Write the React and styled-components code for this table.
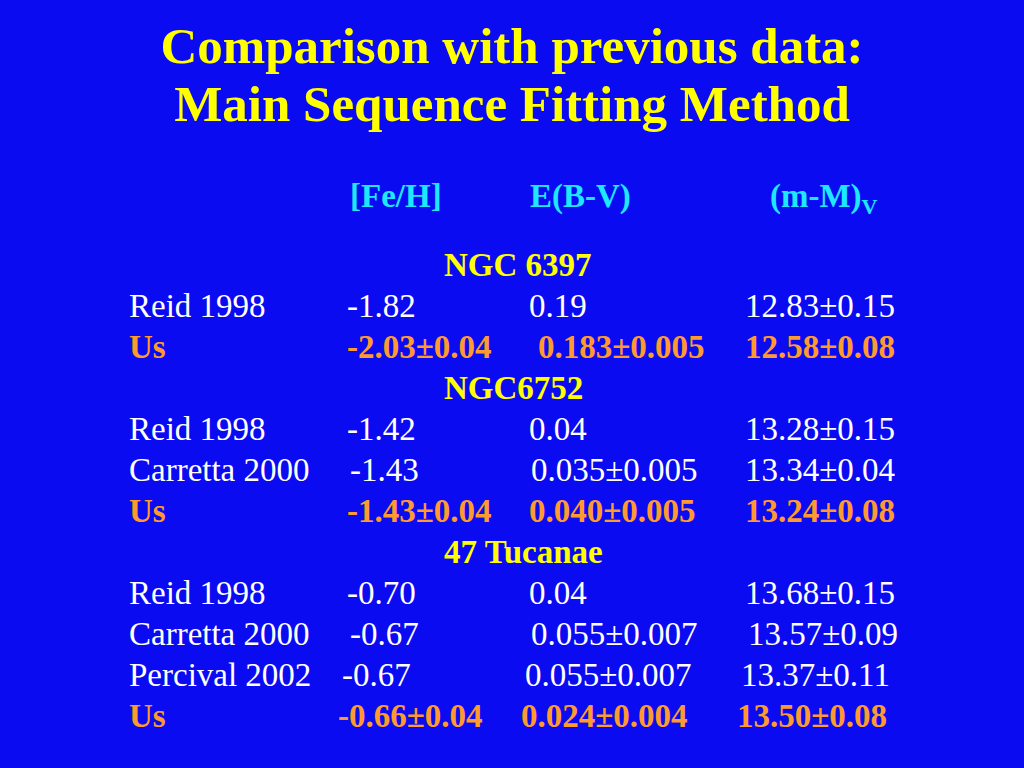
import React from 'react'
import styled, { createGlobalStyle } from 'styled-components'

const Global = createGlobalStyle`
  html, body {
    margin: 0;
    padding: 0;
    background: #0b0bf2;
  }
`

const groups = [
  {
    name: 'NGC 6397',
    rows: [
      { src: 'Reid 1998', fe: ['-1.82', 0], ebv: ['0.19', 0], mm: ['12.83±0.15', 0] },
      { src: 'Us', us: true, fe: ['-2.03±0.04', 0], ebv: ['0.183±0.005', 9], mm: ['12.58±0.08', 0] },
    ],
  },
  {
    name: 'NGC6752',
    rows: [
      { src: 'Reid 1998', fe: ['-1.42', 0], ebv: ['0.04', 0], mm: ['13.28±0.15', 0] },
      { src: 'Carretta 2000', fe: ['-1.43', 3], ebv: ['0.035±0.005', 2], mm: ['13.34±0.04', 0] },
      { src: 'Us', us: true, fe: ['-1.43±0.04', 0], ebv: ['0.040±0.005', 0], mm: ['13.24±0.08', 0] },
    ],
  },
  {
    name: '47 Tucanae',
    rows: [
      { src: 'Reid 1998', fe: ['-0.70', 0], ebv: ['0.04', 0], mm: ['13.68±0.15', 0] },
      { src: 'Carretta 2000', fe: ['-0.67', 3], ebv: ['0.055±0.007', 2], mm: ['13.57±0.09', 3] },
      { src: 'Percival 2002', fe: ['-0.67', -5], ebv: ['0.055±0.007', -4], mm: ['13.37±0.11', -4] },
      { src: 'Us', us: true, fe: ['-0.66±0.04', -9], ebv: ['0.024±0.004', -8], mm: ['13.50±0.08', -8] },
    ],
  },
]

export default function App() {
  return (
    <Slide>
      <Global />
      <Title>
        Comparison with previous data:
        <br />
        Main Sequence Fitting Method
      </Title>
      <Header>
        <span />
        <HeadCell $shift={3}>[Fe/H]</HeadCell>
        <HeadCell $shift={1}>E(B-V)</HeadCell>
        <HeadCell $shift={25}>
          (m-M)<sub>V</sub>
        </HeadCell>
      </Header>
      <Table>
        {groups.map((g) => (
          <React.Fragment key={g.name}>
            <GroupName>{g.name}</GroupName>
            {g.rows.map((r, i) => (
              <Row key={i} $us={r.us}>
                <Cell>{r.src}</Cell>
                <Cell $shift={r.fe[1]}>{r.fe[0]}</Cell>
                <Cell $shift={r.ebv[1]}>{r.ebv[0]}</Cell>
                <Cell $shift={r.mm[1]}>{r.mm[0]}</Cell>
              </Row>
            ))}
          </React.Fragment>
        ))}
      </Table>
    </Slide>
  )
}

const Slide = styled.div`
  width: 1024px;
  height: 768px;
  background: #0b0bf2;
  font-family: 'Liberation Serif', 'Times New Roman', serif;
  overflow: hidden;
  box-sizing: border-box;
  padding-top: 17px;
`

const Title = styled.h1`
  margin: 0;
  text-align: center;
  color: #ffff00;
  font-size: 51px;
  line-height: 58px;
  font-weight: bold;
`

const grid = `
  display: grid;
  grid-template-columns: 218px 182px 216px 1fr;
  padding-left: 129px;
  font-size: 33px;
  line-height: 41px;
  white-space: nowrap;
`

const Header = styled.div`
  ${grid}
  margin-top: 43px;
  color: #1ee8ff;
  font-weight: bold;

  sub {
    font-size: 22px;
    vertical-align: -7px;
    line-height: 0;
  }
`

const HeadCell = styled.span`
  margin-left: ${(p) => p.$shift || 0}px;
`

const Table = styled.div`
  margin-top: 28px;
`

const GroupName = styled.div`
  padding-left: 444px;
  color: #ffff00;
  font-weight: bold;
  font-size: 33px;
  line-height: 41px;
`

const Row = styled.div`
  ${grid}
  color: ${(p) => (p.$us ? '#ff9a2e' : '#ffffff')};
  font-weight: ${(p) => (p.$us ? 'bold' : 'normal')};
`

const Cell = styled.span`
  margin-left: ${(p) => p.$shift || 0}px;
`
